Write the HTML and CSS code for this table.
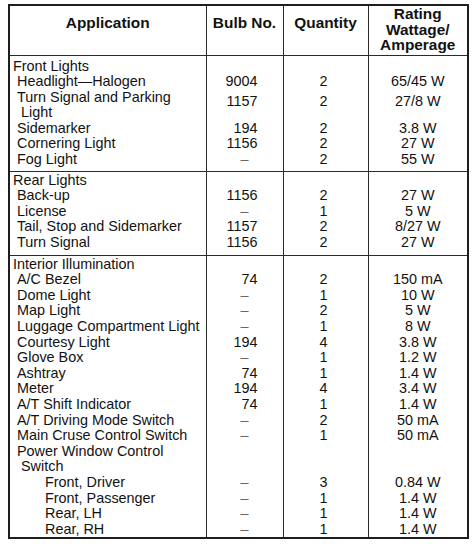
FILE: index.html
```html
<!DOCTYPE html>
<html>
<head>
<meta charset="utf-8">
<link rel="stylesheet" href="styles.css">
</head>
<body>
<table class="bulbs">
  <colgroup>
    <col class="c-app"><col class="c-bulb"><col class="c-qty"><col class="c-rate">
  </colgroup>
  <thead>
    <tr>
      <th class="h-single">Application</th>
      <th class="h-single">Bulb No.</th>
      <th class="h-single">Quantity</th>
      <th class="h-multi">Rating<br>Wattage/<br>Amperage</th>
    </tr>
  </thead>
  <tbody class="sec sec1">
    <tr class="first"><td class="app group">Front Lights</td><td></td><td></td><td></td></tr>
    <tr><td class="app item">Headlight—Halogen</td><td class="bulb">9004</td><td class="qty">2</td><td class="rate">65/45 W</td></tr>
    <tr class="wrap"><td class="app item">Turn Signal and Parking<br><span class="cont">Light</span></td><td class="bulb">1157</td><td class="qty">2</td><td class="rate">27/8 W</td></tr>
    <tr><td class="app item">Sidemarker</td><td class="bulb">194</td><td class="qty">2</td><td class="rate">3.8 W</td></tr>
    <tr><td class="app item">Cornering Light</td><td class="bulb">1156</td><td class="qty">2</td><td class="rate">27 W</td></tr>
    <tr class="last"><td class="app item">Fog Light</td><td class="bulb dash">–</td><td class="qty">2</td><td class="rate">55 W</td></tr>
  </tbody>
  <tbody class="sec sec2">
    <tr class="first"><td class="app group">Rear Lights</td><td></td><td></td><td></td></tr>
    <tr><td class="app item">Back-up</td><td class="bulb">1156</td><td class="qty">2</td><td class="rate">27 W</td></tr>
    <tr><td class="app item">License</td><td class="bulb dash">–</td><td class="qty">1</td><td class="rate">5 W</td></tr>
    <tr><td class="app item">Tail, Stop and Sidemarker</td><td class="bulb">1157</td><td class="qty">2</td><td class="rate">8/27 W</td></tr>
    <tr class="last"><td class="app item">Turn Signal</td><td class="bulb">1156</td><td class="qty">2</td><td class="rate">27 W</td></tr>
  </tbody>
  <tbody class="sec sec3">
    <tr class="first"><td class="app group">Interior Illumination</td><td></td><td></td><td></td></tr>
    <tr><td class="app item">A/C Bezel</td><td class="bulb">74</td><td class="qty">2</td><td class="rate">150 mA</td></tr>
    <tr><td class="app item">Dome Light</td><td class="bulb dash">–</td><td class="qty">1</td><td class="rate">10 W</td></tr>
    <tr><td class="app item">Map Light</td><td class="bulb dash">–</td><td class="qty">2</td><td class="rate">5 W</td></tr>
    <tr><td class="app item">Luggage Compartment Light</td><td class="bulb dash">–</td><td class="qty">1</td><td class="rate">8 W</td></tr>
    <tr><td class="app item">Courtesy Light</td><td class="bulb">194</td><td class="qty">4</td><td class="rate">3.8 W</td></tr>
    <tr><td class="app item">Glove Box</td><td class="bulb dash">–</td><td class="qty">1</td><td class="rate">1.2 W</td></tr>
    <tr><td class="app item">Ashtray</td><td class="bulb">74</td><td class="qty">1</td><td class="rate">1.4 W</td></tr>
    <tr><td class="app item">Meter</td><td class="bulb">194</td><td class="qty">4</td><td class="rate">3.4 W</td></tr>
    <tr><td class="app item">A/T Shift Indicator</td><td class="bulb">74</td><td class="qty">1</td><td class="rate">1.4 W</td></tr>
    <tr><td class="app item">A/T Driving Mode Switch</td><td class="bulb dash">–</td><td class="qty">2</td><td class="rate">50 mA</td></tr>
    <tr><td class="app item">Main Cruse Control Switch</td><td class="bulb dash">–</td><td class="qty">1</td><td class="rate">50 mA</td></tr>
    <tr><td class="app item">Power Window Control<br><span class="cont">Switch</span></td><td></td><td></td><td></td></tr>
    <tr><td class="app sub">Front, Driver</td><td class="bulb dash">–</td><td class="qty">3</td><td class="rate">0.84 W</td></tr>
    <tr><td class="app sub">Front, Passenger</td><td class="bulb dash">–</td><td class="qty">1</td><td class="rate">1.4 W</td></tr>
    <tr><td class="app sub">Rear, LH</td><td class="bulb dash">–</td><td class="qty">1</td><td class="rate">1.4 W</td></tr>
    <tr class="last"><td class="app sub">Rear, RH</td><td class="bulb dash">–</td><td class="qty">1</td><td class="rate">1.4 W</td></tr>
  </tbody>
</table>
</body>
</html>
```

FILE: styles.css
```css
html, body {
  background: #ffffff;
}
body {
  margin: 4px 0 0 8px;
  font-family: "Liberation Sans", Arial, Helvetica, sans-serif;
  color: #121212;
}
.bulbs {
  border-collapse: collapse;
  table-layout: fixed;
  width: 459px;
  border: 2px solid #1e1e1e;
}
.c-app { width: 197px; }
.c-bulb { width: 77px; }
.c-qty { width: 85px; }
.c-rate { width: 100px; }

.bulbs th {
  font-weight: bold;
  font-size: 15.4px;
  line-height: 15.5px;
  text-align: center;
  vertical-align: top;
  padding: 0;
  border-left: 1px solid #2a2a2a;
  border-bottom: 1px solid #2a2a2a;
}
.bulbs th.h-single { padding-top: 9px; }
.bulbs th.h-multi { padding-top: 0; padding-bottom: 2px; }

.bulbs td {
  font-size: 14.4px;
  line-height: 15.6px;
  padding: 0;
  vertical-align: top;
  white-space: nowrap;
  border-left: 1px solid #2a2a2a;
}
.sec { border-top: 1px solid #2a2a2a; }

.sec1 tr.first td { padding-top: 3px; }
.sec1 tr.last td { padding-bottom: 3px; }
.sec2 tr.first td { padding-top: 1px; }
.sec2 tr.last td { padding-bottom: 4px; }
.sec3 tr.first td { padding-top: 1px; }
.sec3 tr.last td { padding-bottom: 0; }

.app.group { padding-left: 3px; }
.app.item { padding-left: 7px; }
.app.sub { padding-left: 35px; }
.cont { padding-left: 4px; }

.bulb {
  font-size: 14px;
  text-align: right;
  padding-right: 25px !important;
}
.bulb.dash {
  text-align: center;
  padding-right: 0 !important;
  color: #666;
}
.qty {
  text-align: center;
  padding-right: 4px !important;
}
.rate { text-align: center; }
.wrap td.bulb, .wrap td.qty, .wrap td.rate { padding-top: 4px; }
```
